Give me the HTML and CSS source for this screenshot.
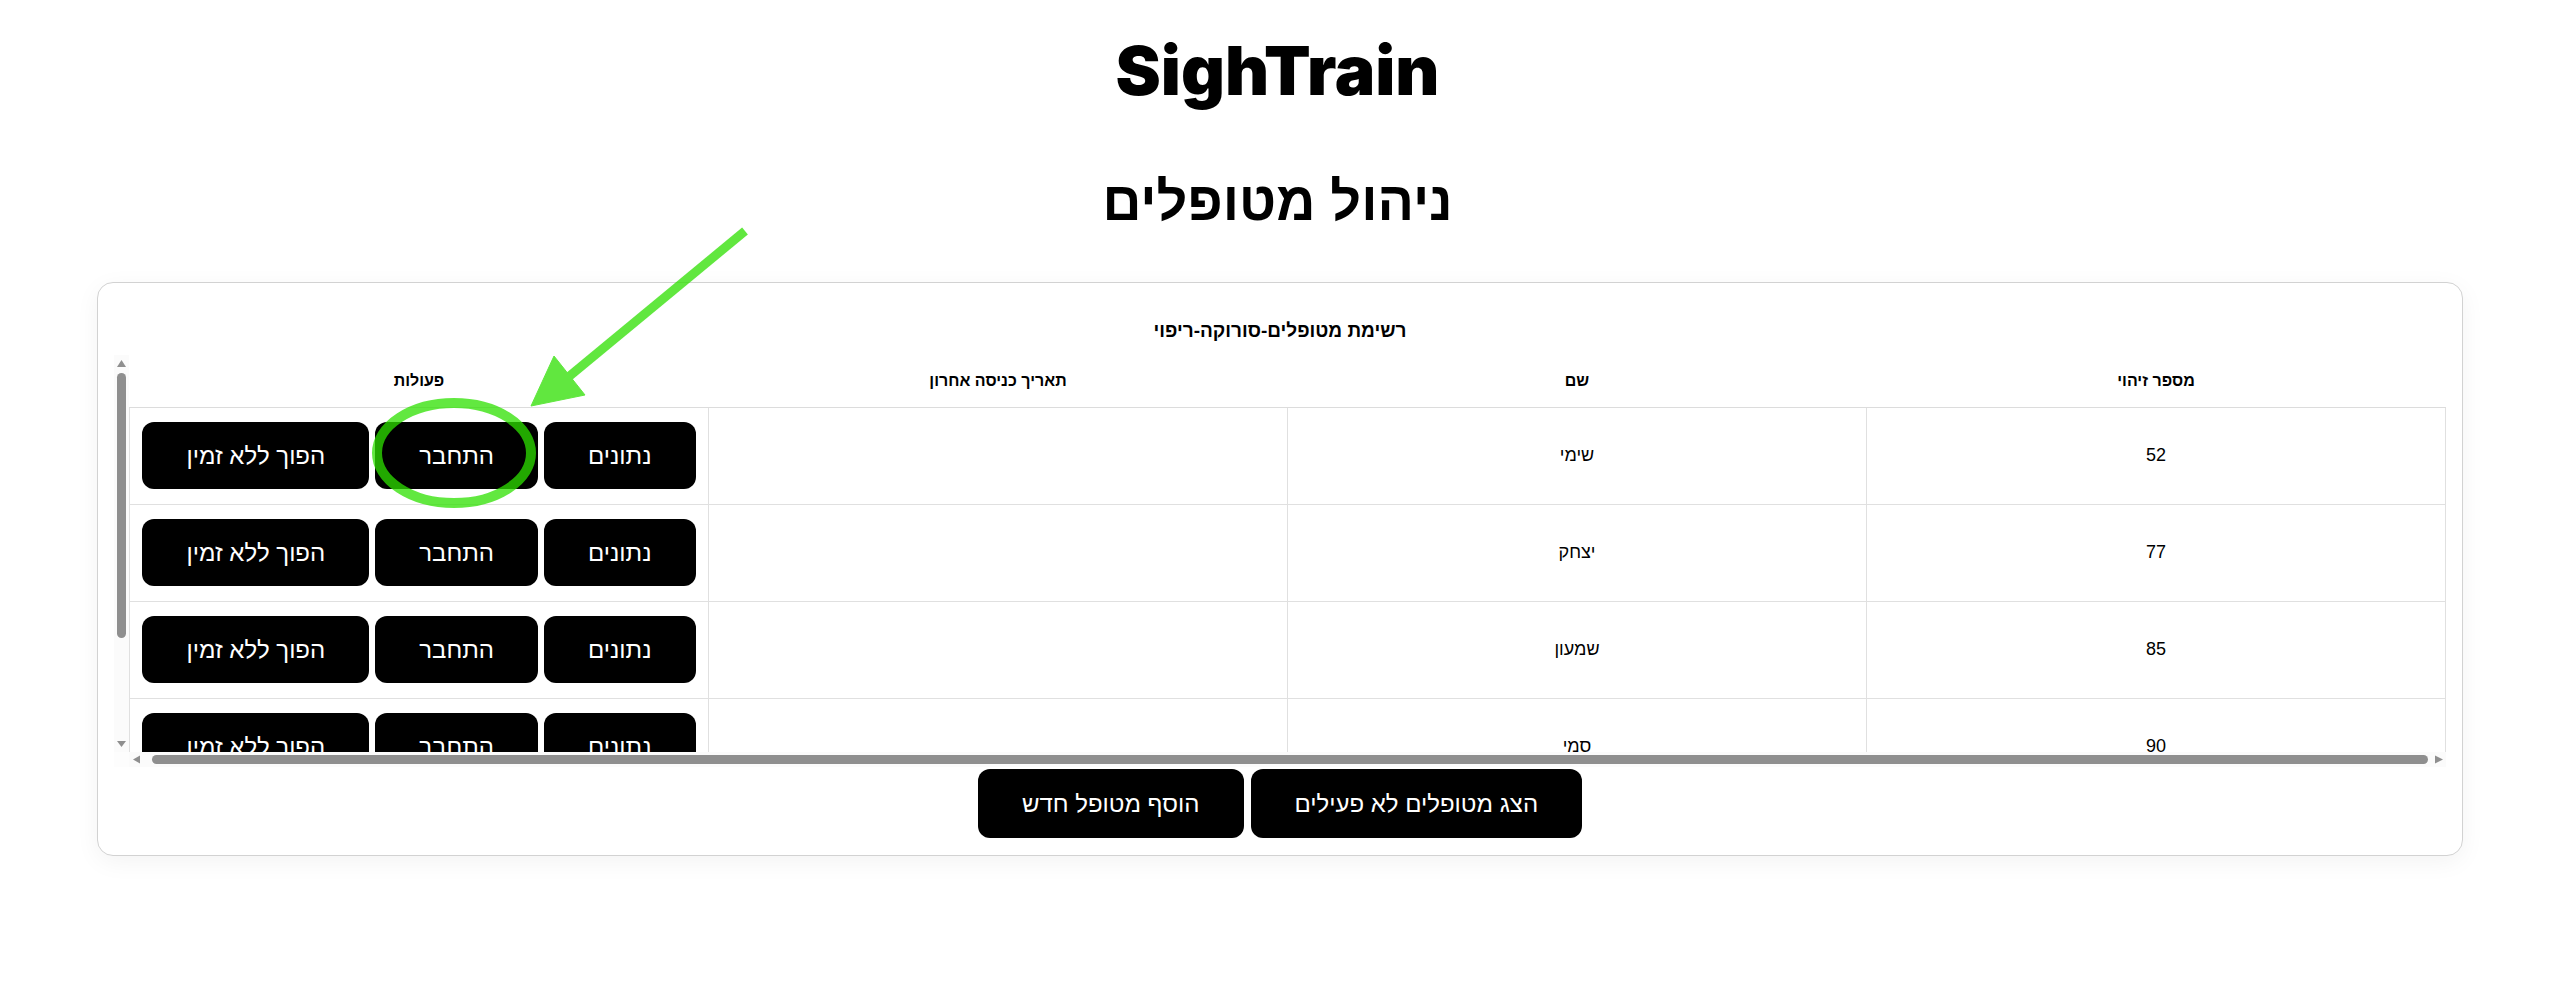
FILE: index.html
```html
<!DOCTYPE html>
<html lang="he" dir="rtl">
<head>
<meta charset="utf-8">
<title>SighTrain</title>
<link rel="stylesheet" href="styles.css">
</head>
<body>
<h1 class="brand">SighTrain</h1>
<h2 class="page-title">ניהול מטופלים</h2>
<section class="card">
  <div class="caption">רשימת מטופלים-סורוקה-ריפוי</div>
  <div class="scroll-frame">
    <div class="viewport">
      <table class="patients">
        <thead>
          <tr><th>מספר זיהוי</th><th>שם</th><th>תאריך כניסה אחרון</th><th>פעולות</th></tr>
        </thead>
        <tbody>
          <tr><td>52</td><td>שימי</td><td></td><td><div class="actions"><button class="btn">נתונים</button><button class="btn">התחבר</button><button class="btn">הפוך ללא זמין</button></div></td></tr>
          <tr><td>77</td><td>יצחק</td><td></td><td><div class="actions"><button class="btn">נתונים</button><button class="btn">התחבר</button><button class="btn">הפוך ללא זמין</button></div></td></tr>
          <tr><td>85</td><td>שמעון</td><td></td><td><div class="actions"><button class="btn">נתונים</button><button class="btn">התחבר</button><button class="btn">הפוך ללא זמין</button></div></td></tr>
          <tr><td>90</td><td>סמי</td><td></td><td><div class="actions"><button class="btn">נתונים</button><button class="btn">התחבר</button><button class="btn">הפוך ללא זמין</button></div></td></tr>
          <tr><td>93</td><td>דוד</td><td></td><td><div class="actions"><button class="btn">נתונים</button><button class="btn">התחבר</button><button class="btn">הפוך ללא זמין</button></div></td></tr>
        </tbody>
      </table>
    </div>
    <div class="vbar" aria-hidden="true">
      <svg class="sb-btn" width="15" height="15" viewBox="0 0 15 15"><polygon points="3,12 7.5,5 12,12" fill="#8f8f8f"/></svg>
      <div class="vthumb"></div>
      <div class="vspace"></div>
      <svg class="sb-btn" width="15" height="15" viewBox="0 0 15 15"><polygon points="3,4 12,4 7.5,10" fill="#8f8f8f"/></svg>
    </div>
    <div class="hbar" aria-hidden="true">
      <svg class="sb-btn" width="15" height="15" viewBox="0 0 15 15"><polygon points="4,7.5 11,3.5 11,11.5" fill="#8f8f8f"/></svg>
      <div class="hthumb"></div>
      <svg class="sb-btn" width="15" height="15" viewBox="0 0 15 15"><polygon points="4,3.5 12,7.5 4,11.5" fill="#8f8f8f"/></svg>
    </div>
    <div class="corner" aria-hidden="true"></div>
  </div>
  <div class="footer-actions">
    <button class="btn btn-lg">הצג מטופלים לא פעילים</button>
    <button class="btn btn-lg">הוסף מטופל חדש</button>
  </div>
</section>
<svg class="annot" width="2555" height="1001" viewBox="0 0 2555 1001" aria-hidden="true">
  <g opacity="0.75">
    <ellipse cx="454" cy="453" rx="77" ry="50" fill="none" stroke="#2de000" stroke-width="10"/>
  </g>
  <g opacity="0.75" fill="#2de000" stroke="#2de000">
    <line x1="745" y1="231" x2="566" y2="379" stroke-width="9"/>
    <polygon points="531,406 554,356 585,395" stroke-width="1"/>
  </g>
</svg>
</body>
</html>
```
FILE: styles.css
```css
html, body {
  margin: 0;
  padding: 0;
  background: #ffffff;
}

body {
  position: relative;
  height: 1001px;
  overflow: hidden;
  font-family: "Liberation Sans", Arimo, "DejaVu Sans", sans-serif;
  color: #000;
}

.brand {
  margin: 31px 0 0;
  font-family: Inter, "Liberation Sans", sans-serif;
  font-weight: 900;
  font-size: 68px;
  line-height: 79px;
  text-align: center;
}

.page-title {
  margin: 61px 0 0;
  font-size: 54px;
  font-weight: 700;
  line-height: 60px;
  text-align: center;
}

.card {
  margin: 51px 92px 0 97px;
  padding: 0 16px 17px;
  border: 1px solid #d2d2d2;
  border-radius: 16px;
  background: #fff;
  box-shadow: 0 6px 24px rgba(0, 0, 0, 0.05);
}

.caption {
  padding-top: 37px;
  margin-bottom: 14px;
  font-size: 19px;
  font-weight: 700;
  line-height: 21px;
  text-align: center;
}

/* table viewport with drawn scrollbars (vertical on the left in RTL) */
.scroll-frame {
  display: grid;
  grid-template-columns: 1fr 15px;
  grid-template-rows: 397px 15px;
  grid-template-areas:
    "view vbar"
    "hbar corner";
}

.viewport {
  grid-area: view;
  overflow: hidden;
  background: #fff;
}

.vbar {
  grid-area: vbar;
  display: flex;
  flex-direction: column;
  align-items: center;
  background: #fbfbfb;
}

.vthumb {
  width: 9px;
  height: 265px;
  margin-top: 3px;
  border-radius: 5px;
  background: #8f8f8f;
}

.vspace {
  flex: 1;
}

.hbar {
  grid-area: hbar;
  direction: ltr;
  display: flex;
  align-items: center;
  background: #fbfbfb;
}

.hthumb {
  flex: 1;
  height: 9px;
  margin: 0 3px 0 8px;
  border-radius: 5px;
  background: #8f8f8f;
}

.corner {
  grid-area: corner;
  background: #fdfdfd;
}

.sb-btn {
  display: block;
  flex: none;
}

.patients {
  width: 100%;
  border-collapse: collapse;
  table-layout: fixed;
}

.patients th {
  padding: 16px;
  font-size: 16px;
  font-weight: 700;
  line-height: 20px;
  text-align: center;
  border-bottom: 1px solid #dcdcdc;
}

.patients td {
  padding: 14px 16px 15px;
  font-size: 18px;
  text-align: center;
  vertical-align: middle;
  border: 1px solid #e0e0e0;
  border-top: 0;
}

.actions {
  display: flex;
  justify-content: center;
  gap: 6px;
}

.btn {
  padding: 20px 44px;
  border: 0;
  border-radius: 12px;
  background: #000;
  color: #fff;
  font-family: "Liberation Sans", Arimo, "DejaVu Sans", sans-serif;
  font-size: 24px;
  line-height: 27px;
  white-space: nowrap;
}

.footer-actions {
  display: flex;
  justify-content: center;
  gap: 7px;
  margin-top: 2px;
}

.btn-lg {
  padding: 21px 44px;
}

.annot {
  position: absolute;
  top: 0;
  left: 0;
  pointer-events: none;
}
```
